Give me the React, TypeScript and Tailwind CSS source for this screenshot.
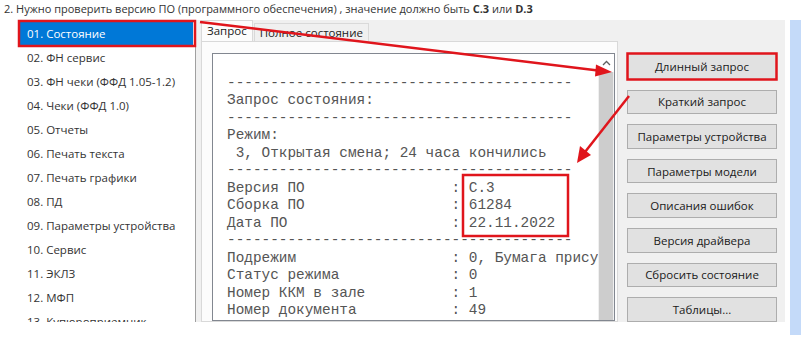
import React from 'react';

const menuItems = [
  '01. Состояние',
  '02. ФН сервис',
  '03. ФН чеки (ФФД 1.05-1.2)',
  '04. Чеки (ФФД 1.0)',
  '05. Отчеты',
  '06. Печать текста',
  '07. Печать графики',
  '08. ПД',
  '09. Параметры устройства',
  '10. Сервис',
  '11. ЭКЛЗ',
  '12. МФП',
  '13. Купюроприемник',
];

const buttons = [
  'Длинный запрос',
  'Краткий запрос',
  'Параметры устройства',
  'Параметры модели',
  'Описания ошибок',
  'Версия драйвера',
  'Сбросить состояние',
  'Таблицы...',
];

const dash = '-'.repeat(40);
const row = (label: string, value: string) => label.padEnd(26, ' ') + ': ' + value;

const memoLines = [
  '',
  dash,
  'Запрос состояния:',
  dash,
  'Режим:',
  ' 3, Открытая смена; 24 часа кончились',
  dash,
  row('Версия ПО', 'C.3'),
  row('Сборка ПО', '61284'),
  row('Дата ПО', '22.11.2022'),
  dash,
  row('Подрежим', '0, Бумага прису'),
  row('Статус режима', '0'),
  row('Номер ККМ в зале', '1'),
  row('Номер документа', '49'),
];

const App: React.FC = () => {
  return (
    <div className="relative w-[801px] h-[343px] bg-white overflow-hidden" style={{ fontFamily: '"Open Sans", "Noto Sans", sans-serif' }}>
      {/* Caption */}
      <div className="h-[20px] pl-[4px] pt-[1px] text-[11px] leading-[16px] text-[#333] whitespace-nowrap">
        2. Нужно проверить версию ПО (программного обеспечения) , значение должно быть <b>C.3</b> или <b>D.3</b>
      </div>

      <div className="flex">
        {/* Screenshot of the driver window */}
        <div className="ml-[18px] w-[767px] h-[302px] bg-[#f0f0f0] flex overflow-hidden">
          {/* Left menu list */}
          <div className="w-[178px] h-full bg-white border-r border-[#a0a0a0] pt-[2px] text-[11.5px] text-[#333]">
            {menuItems.map((item, i) => (
              <div
                key={item}
                className={
                  i === 0
                    ? 'h-[24px] mx-[2px] pl-[7px] flex items-center bg-[#0078d7] text-white'
                    : 'h-[24px] pl-[9px] flex items-center whitespace-nowrap'
                }
              >
                {item}
              </div>
            ))}
          </div>

          {/* Tab control */}
          <div className="ml-[5px] w-[417px] h-full flex flex-col">
            <div className="h-[21px] flex items-end text-[11.5px] text-[#222]">
              <div className="h-[21px] px-[5px] bg-[#fcfcfc] border border-b-0 border-[#d9d9d9] flex items-center">Запрос</div>
              <div className="h-[18px] ml-[1px] px-[5px] bg-[#f0f0f0] border border-b-0 border-[#d9d9d9] flex items-center">Полное состояние</div>
            </div>
            <div className="flex-1 bg-[#fcfcfc] border border-[#d9d9d9] pl-[10px] pt-[11px] pr-[2px]">
              <div className="w-[403px] h-full bg-white border border-[#828790] flex">
                <div className="flex-1 pl-[14px] pt-[3px] overflow-hidden">
                  {memoLines.map((line, i) => (
                    <div
                      key={i}
                      className="h-[17.5px] leading-[17.5px] text-[14.4px] text-[#555] whitespace-pre"
                      style={{ fontFamily: '"Liberation Mono", "Courier New", monospace' }}
                    >
                      {line}
                    </div>
                  ))}
                </div>
                <div className="w-[16px] h-full bg-[#f0f0f0] flex flex-col">
                  <div className="h-[18px] bg-white flex items-center justify-center">
                    <svg width="9" height="6" viewBox="0 0 9 6">
                      <path d="M1 5 L4.5 1.5 L8 5" fill="none" stroke="#606060" strokeWidth="1.3" />
                    </svg>
                  </div>
                  <div className="flex-1 mx-[1px] bg-[#cdcdcd]" />
                </div>
              </div>
            </div>
          </div>

          {/* Buttons */}
          <div className="ml-[9px] w-[150px] pt-[33px] flex flex-col gap-[10px]">
            {buttons.map((b, i) => (
              <div
                key={b}
                className={
                  (i === 0 ? 'h-[27px] ' : 'h-[25px] ') +
                  'bg-[#e1e1e1] border border-[#adadad] flex items-center justify-center text-[11.5px] text-[#1a1a1a] whitespace-nowrap'
                }
              >
                {b}
              </div>
            ))}
          </div>
        </div>

        {/* Right blue strip */}
        <div className="ml-[5px] w-[11px] h-[315px] bg-[#c4daf9]" />
      </div>

      {/* Red annotations */}
      <svg className="absolute inset-0 pointer-events-none" width="801" height="343">
        <rect x="19" y="21" width="176" height="25" fill="none" stroke="#e0151c" strokeWidth="2.5" />
        <rect x="627.5" y="53.5" width="149" height="26" fill="none" stroke="#e0151c" strokeWidth="2.5" />
        <rect x="463" y="175" width="105" height="61" fill="none" stroke="#e0151c" strokeWidth="2.5" />
        <line x1="200" y1="22" x2="598" y2="70.5" stroke="#e0151c" strokeWidth="2.5" />
        <polygon points="612,72 596,64.5 595,76.5" fill="#e0151c" />
        <line x1="629" y1="96" x2="585" y2="152" stroke="#e0151c" strokeWidth="2.5" />
        <polygon points="577,163 580,146 591,155" fill="#e0151c" />
      </svg>
    </div>
  );
};

export default App;
